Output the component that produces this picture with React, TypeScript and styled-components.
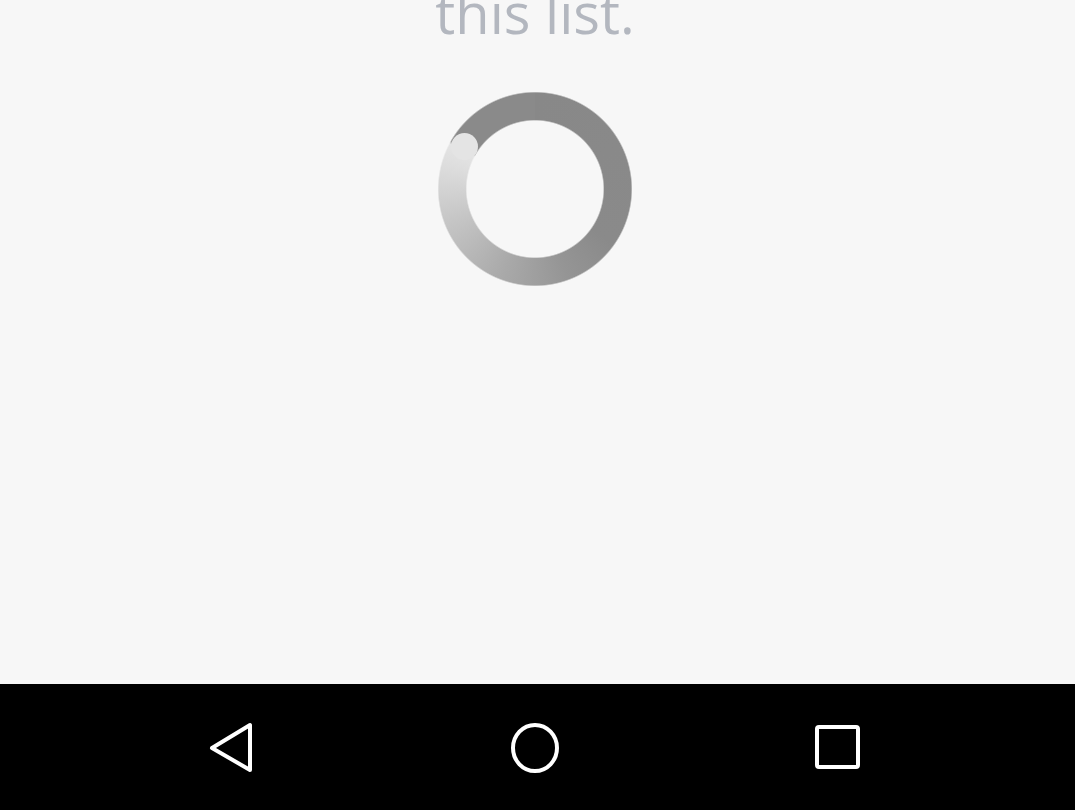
import React from "react";
import styled, { createGlobalStyle } from "styled-components";

const Global = createGlobalStyle`
  html, body { margin: 0; padding: 0; }
  body { background: #f7f7f7; font-family: "Open Sans", "Noto Sans", sans-serif; overflow: hidden; }
`;

const Screen = styled.div`
  width: 1075px;
  height: 810px;
  display: flex;
  flex-direction: column;
  background: #f7f7f7;
  overflow: hidden;
`;

const Content = styled.main`
  flex: 1;
  display: flex;
  flex-direction: column;
  align-items: center;
  padding-right: 5px;
  overflow: hidden;
`;

const Message = styled.p`
  margin: -23px 0 0;
  font-family: "Open Sans", "Noto Sans", sans-serif;
  font-size: 56px;
  font-weight: 500;
  line-height: 70px;
  color: #b3b7bf;
  text-align: center;
`;

const Spinner = styled.div`
  margin-top: 44px;
  width: 196px;
  height: 196px;
  border-radius: 50%;
  position: relative;
  background: conic-gradient(
    from 0deg,
    #888888 0deg,
    #8a8a8a 125deg,
    #959595 160deg,
    #a9a9a9 200deg,
    #c6c6c6 250deg,
    #dddddd 285deg,
    #e4e4e4 298deg,
    #8a8a8a 300deg
  );
  -webkit-mask: radial-gradient(circle, transparent 68px, #000 69.5px, #000 96px, transparent 97.5px);
  mask: radial-gradient(circle, transparent 68px, #000 69.5px, #000 96px, transparent 97.5px);

  &::after {
    content: "";
    position: absolute;
    left: 14px;
    top: 42px;
    width: 27px;
    height: 27px;
    border-radius: 50%;
    background: #e4e4e4;
  }
`;

const NavBar = styled.nav`
  height: 126px;
  background: #000;
  display: flex;
  justify-content: center;
  align-items: center;
  gap: 203px;
  padding-right: 5px;
`;

const NavButton = styled.button`
  width: 100px;
  height: 60px;
  padding: 0;
  border: none;
  background: transparent;
  display: flex;
  align-items: center;
  justify-content: center;
  margin-top: 1px;
`;

export default function App() {
  return (
    <>
      <Global />
      <Screen>
        <Content>
          <Message>this list.</Message>
          <Spinner />
        </Content>
        <NavBar>
          <NavButton aria-label="Back">
            <svg width="48" height="54" viewBox="0 0 48 54">
              <path
                d="M42 4 L42 49 L4 27 Z"
                fill="none"
                stroke="#fff"
                strokeWidth="4"
                strokeLinejoin="round"
              />
            </svg>
          </NavButton>
          <NavButton aria-label="Home">
            <svg width="50" height="52" viewBox="0 0 50 52">
              <ellipse cx="25" cy="26" rx="22" ry="23" fill="none" stroke="#fff" strokeWidth="4" />
            </svg>
          </NavButton>
          <NavButton aria-label="Recents">
            <svg width="48" height="48" viewBox="0 0 48 48">
              <rect x="3" y="3" width="41" height="40" rx="2" fill="none" stroke="#fff" strokeWidth="4" />
            </svg>
          </NavButton>
        </NavBar>
      </Screen>
    </>
  );
}
